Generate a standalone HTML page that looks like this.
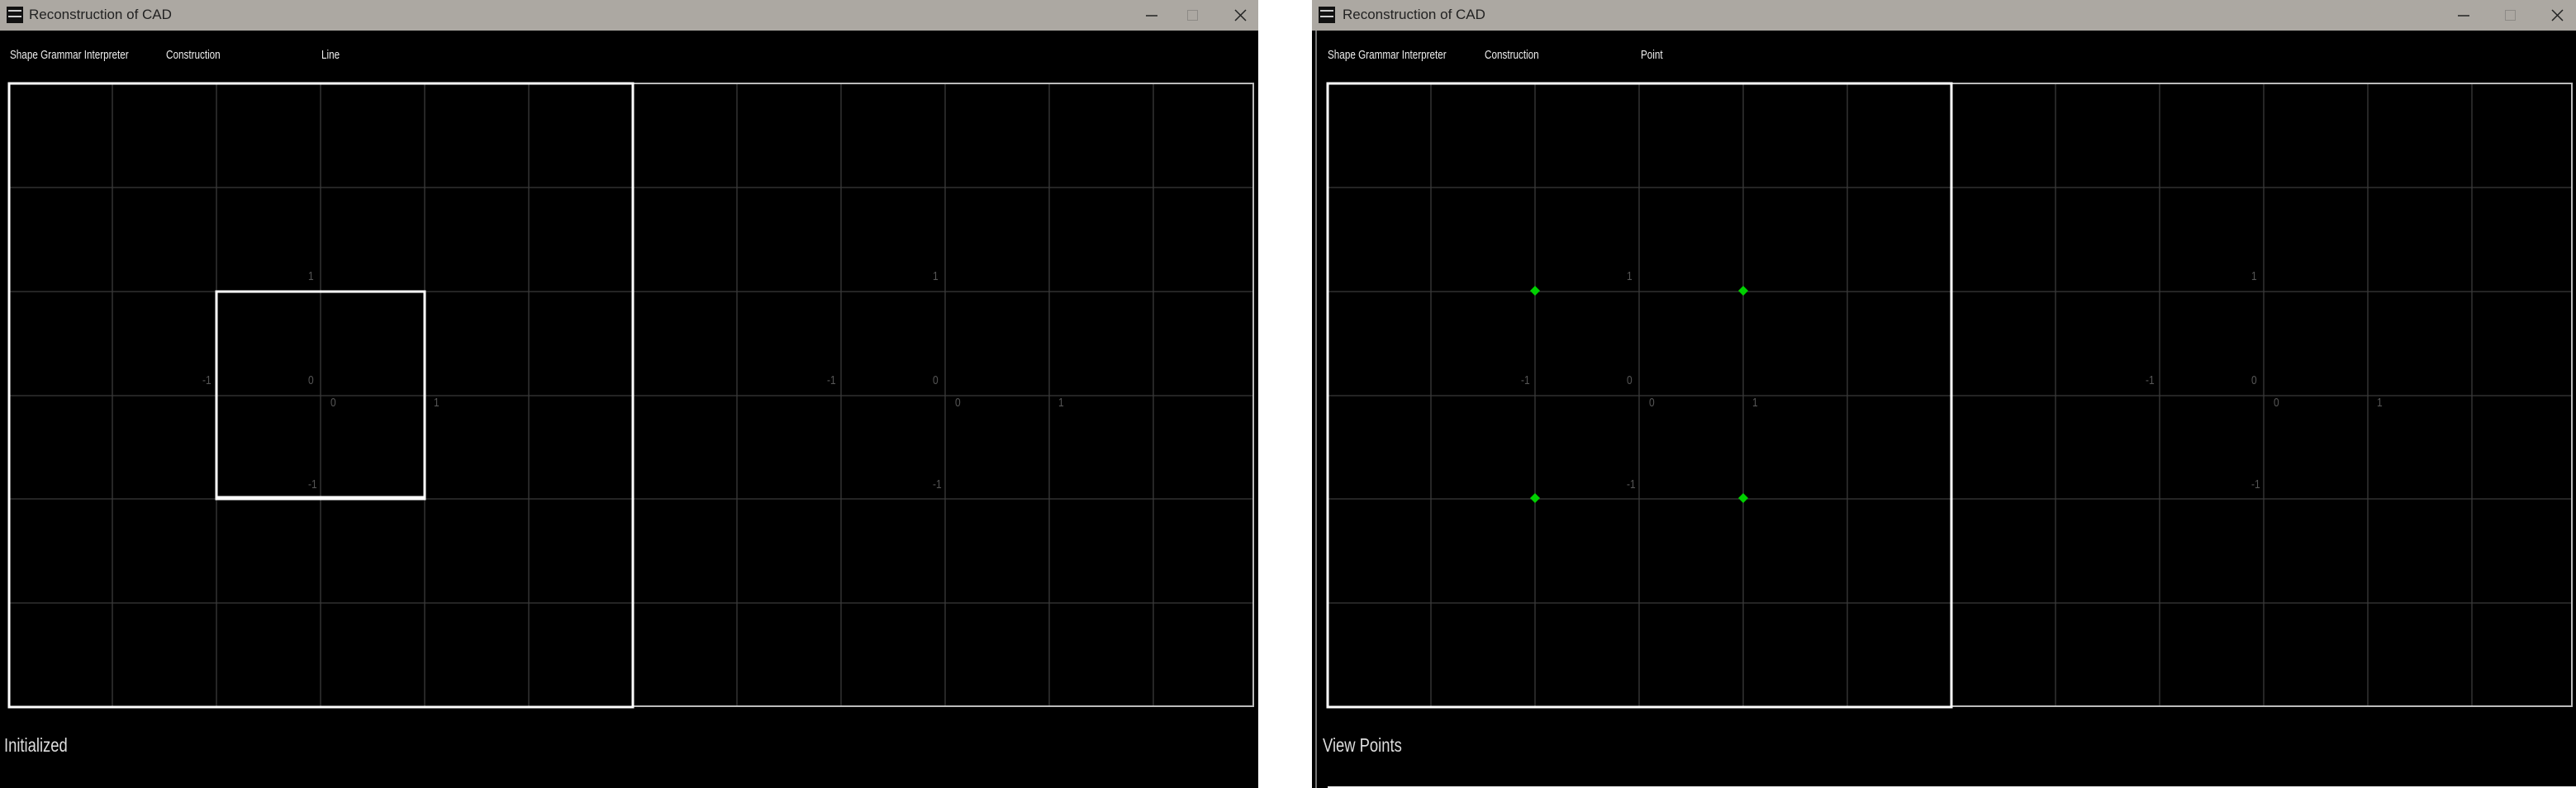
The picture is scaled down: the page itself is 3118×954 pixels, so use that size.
<!DOCTYPE html>
<html><head><meta charset="utf-8"><style>
body{margin:0;width:3118px;height:954px;background:#fff;overflow:hidden;position:relative;font-family:"Liberation Sans",sans-serif}
.t{position:absolute;white-space:nowrap;transform-origin:0 0}
.m{color:#eee;font-size:15px;transform:scaleX(.78)}
.s{color:#ddd;font-size:23px;transform:scaleX(.8)}
.ti{color:#222;font-size:17px}
.l{position:absolute;color:#555;font-size:15px;transform:scaleX(.8);transform-origin:0 0}
</style></head><body>
<svg width="3118" height="954" style="position:absolute;left:0;top:0">
<defs>
<g id="grid">
<g stroke="#3a3a3a" stroke-width="1.3">
<line x1="136" y1="100" x2="136" y2="856"/><line x1="262" y1="100" x2="262" y2="856"/><line x1="388" y1="100" x2="388" y2="856"/><line x1="514" y1="100" x2="514" y2="856"/><line x1="640" y1="100" x2="640" y2="856"/>
<line x1="892" y1="100" x2="892" y2="856"/><line x1="1018" y1="100" x2="1018" y2="856"/><line x1="1144" y1="100" x2="1144" y2="856"/><line x1="1270" y1="100" x2="1270" y2="856"/><line x1="1396" y1="100" x2="1396" y2="856"/>
<line x1="10" y1="227" x2="1518" y2="227"/><line x1="10" y1="353" x2="1518" y2="353"/><line x1="10" y1="479" x2="1518" y2="479"/><line x1="10" y1="604" x2="1518" y2="604"/><line x1="10" y1="730" x2="1518" y2="730"/>
</g>
<rect x="766" y="101" width="751" height="754" fill="none" stroke="#bbb" stroke-width="2"/>
<rect x="11" y="101" width="755" height="755" fill="none" stroke="#fff" stroke-width="3"/>
</g>
</defs>
<rect x="0" y="0" width="1523" height="954" fill="#000"/>
<rect x="0" y="0" width="1523" height="37" fill="#aca8a2"/>
<use href="#grid"/>
<rect x="262" y="353" width="252" height="251" fill="none" stroke="#fff" stroke-width="3"/>
<line x1="262" y1="603" x2="514" y2="603" stroke="#fff" stroke-width="5"/>
<rect x="8" y="8" width="20" height="20" fill="#111"/>
<g fill="#ccc"><rect x="10" y="12" width="16" height="2"/><rect x="10" y="19" width="16" height="2"/></g>
<line x1="1387" y1="19" x2="1401" y2="19" stroke="#222" stroke-width="1.5"/>
<rect x="1437.5" y="12.5" width="12" height="12" fill="none" stroke="#8d8a86" stroke-width="1"/>
<path d="M1495 12 L1508 25 M1508 12 L1495 25" stroke="#222" stroke-width="1.5"/>
<rect x="1588" y="0" width="1530" height="954" fill="#000"/>
<rect x="1588" y="0" width="1530" height="37" fill="#aca8a2"/>
<line x1="1593" y1="37" x2="1593" y2="954" stroke="#999" stroke-width="1.5"/>
<use href="#grid" transform="translate(1596,0)"/>
<g fill="#00d000">
<path d="M1858 346 l6 6 l-6 6 l-6 -6z"/><path d="M2110 346 l6 6 l-6 6 l-6 -6z"/>
<path d="M1858 597 l6 6 l-6 6 l-6 -6z"/><path d="M2110 597 l6 6 l-6 6 l-6 -6z"/>
</g>
<rect x="1596" y="8" width="20" height="20" fill="#111"/>
<g fill="#ccc"><rect x="1598" y="12" width="16" height="2"/><rect x="1598" y="19" width="16" height="2"/></g>
<line x1="2975" y1="19" x2="2989" y2="19" stroke="#222" stroke-width="1.5"/>
<rect x="3032.5" y="12.5" width="12" height="12" fill="none" stroke="#8d8a86" stroke-width="1"/>
<path d="M3089 12 L3102 25 M3102 12 L3089 25" stroke="#222" stroke-width="1.5"/>
<line x1="1607" y1="953" x2="3118" y2="953" stroke="#fff" stroke-width="2"/>
</svg>

<div class="t ti" style="left:35px;top:8px">Reconstruction of CAD</div>
<div class="t ti" style="left:1625px;top:8px">Reconstruction of CAD</div>

<div class="t m" style="left:12px;top:58px">Shape Grammar Interpreter</div>
<div class="t m" style="left:201px;top:58px">Construction</div>
<div class="t m" style="left:389px;top:58px">Line</div>
<div class="t m" style="left:1607px;top:58px">Shape Grammar Interpreter</div>
<div class="t m" style="left:1797px;top:58px">Construction</div>
<div class="t m" style="left:1986px;top:58px">Point</div>

<div class="t s" style="left:5px;top:889px">Initialized</div>
<div class="t s" style="left:1601px;top:889px">View Points</div>

<div class="l" style="left:373px;top:326px">1</div>
<div class="l" style="left:245px;top:452px">-1</div>
<div class="l" style="left:373px;top:452px">0</div>
<div class="l" style="left:400px;top:479px">0</div>
<div class="l" style="left:525px;top:479px">1</div>
<div class="l" style="left:373px;top:578px">-1</div>

<div class="l" style="left:1129px;top:326px">1</div>
<div class="l" style="left:1001px;top:452px">-1</div>
<div class="l" style="left:1129px;top:452px">0</div>
<div class="l" style="left:1156px;top:479px">0</div>
<div class="l" style="left:1281px;top:479px">1</div>
<div class="l" style="left:1129px;top:578px">-1</div>

<div class="l" style="left:1969px;top:326px">1</div>
<div class="l" style="left:1841px;top:452px">-1</div>
<div class="l" style="left:1969px;top:452px">0</div>
<div class="l" style="left:1996px;top:479px">0</div>
<div class="l" style="left:2121px;top:479px">1</div>
<div class="l" style="left:1969px;top:578px">-1</div>

<div class="l" style="left:2725px;top:326px">1</div>
<div class="l" style="left:2597px;top:452px">-1</div>
<div class="l" style="left:2725px;top:452px">0</div>
<div class="l" style="left:2752px;top:479px">0</div>
<div class="l" style="left:2877px;top:479px">1</div>
<div class="l" style="left:2725px;top:578px">-1</div>
</body></html>
